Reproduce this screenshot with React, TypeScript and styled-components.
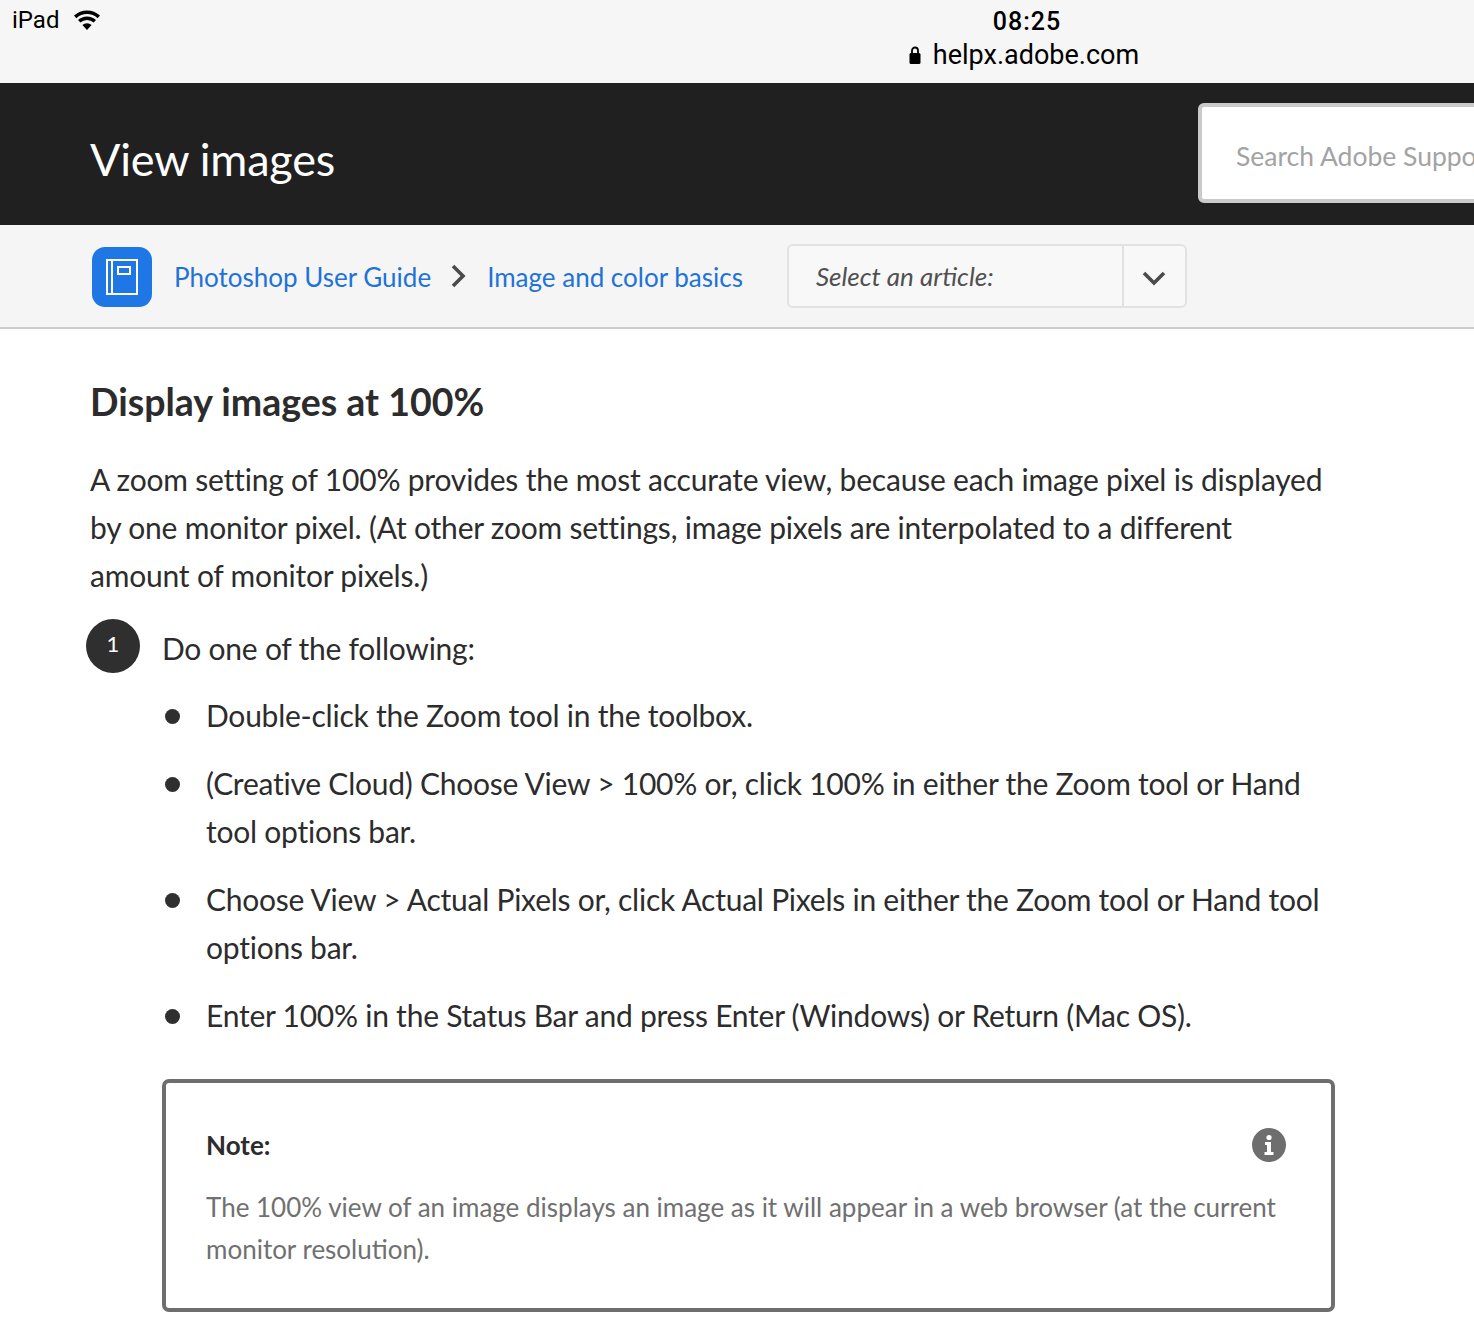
import React from 'react';
import styled, { createGlobalStyle } from 'styled-components';

const bodyFont = `'Lato', 'Open Sans', sans-serif`;
const steps = [
  <>Double-click the Zoom tool in the toolbox.</>,
  <>
    (Creative Cloud) Choose View &gt; 100% or, click 100% in either the Zoom tool or Hand
    <br />
    tool options bar.
  </>,
  <>
    Choose View &gt; Actual Pixels or, click Actual Pixels in either the Zoom tool or Hand tool
    <br />
    options bar.
  </>,
  <>Enter 100% in the Status Bar and press Enter (Windows) or Return (Mac OS).</>,
];

const GlobalStyle = createGlobalStyle`
  html, body {
    margin: 0;
    background: #fff;
  }
  * {
    box-sizing: border-box;
  }
`;

const Page = styled.div`
  width: 1474px;
  height: 1324px;
  overflow: hidden;
  font-family: ${bodyFont};
  color: #2c2c2c;
`;

const StatusBar = styled.div`
  height: 83px;
  background: #f6f6f6;
  display: flex;
  padding-left: 12px;
  font-family: 'Roboto', 'Liberation Sans', sans-serif;
  color: #000;
`;

const Device = styled.div`
  width: 896px;
  height: 40px;
  display: flex;
  align-items: center;
  gap: 14px;
  font-size: 24px;
`;

const Center = styled.div`
  width: 238px;
  display: flex;
  flex-direction: column;
  align-items: center;
`;

const Time = styled.div`
  font-size: 25px;
  font-weight: 500;
  line-height: 28px;
  margin-top: 8px;
  letter-spacing: 1px;
`;

const Url = styled.div`
  display: flex;
  align-items: center;
  gap: 12px;
  font-size: 27px;
  line-height: 34px;
  margin: 2px 6px 0 0;
`;

const Header = styled.header`
  height: 142px;
  background: #202020;
  display: flex;
  padding: 20px 0 0 90px;
`;

const Title = styled.h1`
  margin: 26px 0 0;
  width: 1108px;
  flex-shrink: 0;
  font-size: 45px;
  line-height: 60px;
  font-weight: 400;
  letter-spacing: -0.2px;
  color: #fff;
`;

const Search = styled.div`
  width: 400px;
  height: 100px;
  flex-shrink: 0;
  background: #fff;
  border: 4px solid #cacaca;
  border-radius: 6px;
  display: flex;
  align-items: center;
  padding: 6px 0 0 34px;
  font-size: 26.500px;
  color: #a3a3a3;
  white-space: nowrap;
  overflow: hidden;
`;

const Crumbs = styled.nav`
  height: 104px;
  background: #f5f5f5;
  border-bottom: 2px solid #cccccc;
  display: flex;
  align-items: center;
  padding-left: 92px;
`;

const Badge = styled.div`
  width: 60px;
  height: 60px;
  border-radius: 13px;
  background: #1f77e6;
  display: flex;
  align-items: center;
  justify-content: center;
  margin: 1px 22px 0 0;
`;

const Crumb = styled.a`
  font-size: 26px;
  margin-top: 2px;
  color: #1f72d8;
`;

const Sep = styled.svg`
  margin: 0 19px;
`;

const Select = styled.div`
  width: 400px;
  height: 64px;
  margin-left: 44px;
  border: 2px solid #e2e2e2;
  border-radius: 6px;
  background: #f8f8f8;
  display: flex;
  align-items: center;
`;

const SelectLabel = styled.div`
  width: 335px;
  height: 100%;
  border-right: 2px solid #e2e2e2;
  padding-left: 27px;
  display: flex;
  align-items: center;
  font-size: 26px;
  font-style: italic;
  color: #505050;
`;

const SelectArrow = styled.div`
  flex: 1;
  display: flex;
  justify-content: center;
  padding-top: 3px;
`;

const Content = styled.main`
  padding: 47px 0 0 90px;
`;

const Heading = styled.h2`
  margin: 0;
  font-size: 37.500px;
  line-height: 52px;
  font-weight: 700;
  color: #2c2c2c;
`;

const Para = styled.p`
  margin: 27px 0 0;
  font-size: 30px;
  line-height: 48px;
  letter-spacing: -0.2px;
`;

const StepRow = styled.div`
  display: flex;
  align-items: flex-start;
  margin: 20px 0 0 -4px;
`;

const StepNum = styled.div`
  width: 54px;
  height: 54px;
  border-radius: 50%;
  background: #2f2f2f;
  color: #fff;
  font-size: 22px;
  display: flex;
  align-items: center;
  justify-content: center;
  padding-bottom: 5px;
  margin-right: 22px;
`;

const StepText = styled.div`
  font-size: 30px;
  line-height: 48px;
  letter-spacing: -0.24px;
  margin-top: 5px;
`;

const Bullets = styled.ul`
  list-style: none;
  margin: 18px 0 0 72px;
  padding: 0;
  display: flex;
  flex-direction: column;
  gap: 20px;
`;

const Bullet = styled.li`
  display: flex;
  font-size: 30px;
  line-height: 48px;
  letter-spacing: -0.24px;
  &::before {
    content: '';
    width: 15px;
    height: 15px;
    margin: 18px 26px 0 3px;
    border-radius: 50%;
    background: #2f2f2f;
    flex-shrink: 0;
  }
`;

const Note = styled.section`
  position: relative;
  width: 1173px;
  height: 233px;
  margin: 40px 0 0 72px;
  border: 4px solid #6e6e6e;
  border-radius: 7px;
  padding: 44px 0 0 40px;
`;

const NoteTitle = styled.div`
  font-size: 26px;
  line-height: 36px;
  font-weight: 700;
`;

const NoteBody = styled.div`
  margin-top: 23px;
  font-size: 26px;
  line-height: 42px;
  color: #707070;
`;

const InfoIcon = styled.svg`
  position: absolute;
  top: 45px;
  right: 45px;
`;

const Wifi = () => (
  <svg width="28" height="20" viewBox="0 0 28 20">
    <path d="M14 20l-4.600-5a6.600 6.600 0 0 1 9.200 0z" fill="#000" />
    <path d="M7.400 12.600l-2.400-2.600a13 13 0 0 1 18 0l-2.400 2.600a9.600 9.600 0 0 0-13.200 0z" fill="#000" />
    <path d="M3.400 8.200L1 5.600a19 19 0 0 1 26 0l-2.400 2.600a15.600 15.600 0 0 0-21.200 0z" fill="#000" />
  </svg>
);

const Lock = () => (
  <svg width="12" height="18" viewBox="0 0 12 18">
    <rect x="0.500" y="7" width="11" height="11" rx="1.500" fill="#000" />
    <path d="M3 8V4.500a3 3 0 0 1 6 0V8" fill="none" stroke="#000" strokeWidth="1.800" />
  </svg>
);

const Chevron = () => (
  <svg width="26" height="16" viewBox="0 0 26 16">
    <path d="M3 3l10 10 10-10" fill="none" stroke="#4b4b4b" strokeWidth="3.600" />
  </svg>
);

export default function App() {
  return (
    <Page>
      <GlobalStyle />
      <StatusBar>
        <Device>
          iPad
          <Wifi />
        </Device>
        <Center>
          <Time>08:25</Time>
          <Url>
            <Lock />
            helpx.adobe.com
          </Url>
        </Center>
      </StatusBar>
      <Header>
        <Title>View images</Title>
        <Search>Search Adobe Support</Search>
      </Header>
      <Crumbs>
        <Badge>
          <svg width="32" height="36" viewBox="0 0 32 36" fill="none" stroke="#fff" strokeWidth="2">
            <rect x="1" y="1" width="30" height="34" />
            <path d="M6 1v34" />
            <rect x="12" y="8" width="12" height="7" />
          </svg>
        </Badge>
        <Crumb>Photoshop User Guide</Crumb>
        <Sep width="18" height="26" viewBox="0 0 18 26">
          <path d="M3 3l10 10L3 23" fill="none" stroke="#4b4b4b" strokeWidth="3.600" />
        </Sep>
        <Crumb>Image and color basics</Crumb>
        <Select>
          <SelectLabel>Select an article:</SelectLabel>
          <SelectArrow>
            <Chevron />
          </SelectArrow>
        </Select>
      </Crumbs>
      <Content>
        <Heading>Display images at 100%</Heading>
        <Para>
          A zoom setting of 100% provides the most accurate view, because each image pixel is displayed
          <br />
          by one monitor pixel. (At other zoom settings, image pixels are interpolated to a different
          <br />
          amount of monitor pixels.)
        </Para>
        <StepRow>
          <StepNum>1</StepNum>
          <StepText>Do one of the following:</StepText>
        </StepRow>
        <Bullets>
          {steps.map((step, i) => (
            <Bullet key={i}>
              <div>{step}</div>
            </Bullet>
          ))}
        </Bullets>
        <Note>
          <NoteTitle>Note:</NoteTitle>
          <InfoIcon width="34" height="34" viewBox="0 0 34 34">
            <circle cx="17" cy="17" r="17" fill="#6e6e6e" />
            <circle cx="17" cy="9.500" r="2.600" fill="#fff" />
            <path d="M13 14h6v10h2.500v3H12.500v-3H15v-7h-2z" fill="#fff" />
          </InfoIcon>
          <NoteBody>
            The 100% view of an image displays an image as it will appear in a web browser (at the current
            <br />
            monitor resolution).
          </NoteBody>
        </Note>
      </Content>
    </Page>
  );
}
